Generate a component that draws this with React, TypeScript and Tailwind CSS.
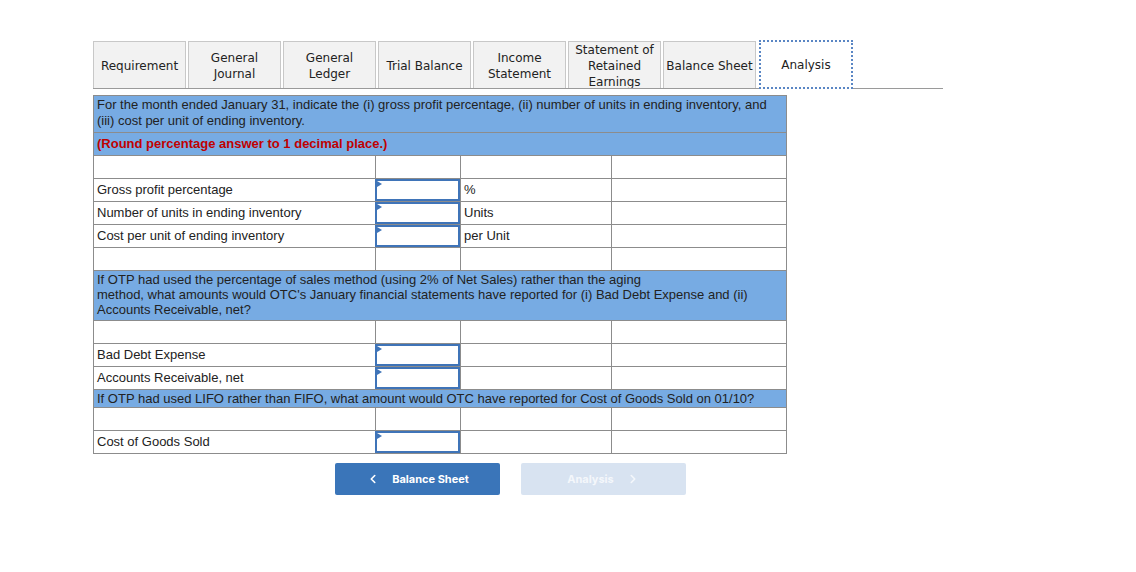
import { ChevronLeft, ChevronRight } from "lucide-react";

type Tab = { label: string[]; active?: boolean };

const tabs: Tab[] = [
  { label: ["Requirement"] },
  { label: ["General", "Journal"] },
  { label: ["General", "Ledger"] },
  { label: ["Trial Balance"] },
  { label: ["Income", "Statement"] },
  { label: ["Statement of", "Retained", "Earnings"] },
  { label: ["Balance Sheet"] },
  { label: ["Analysis"], active: true },
];

const cell = "border border-[#8c8c8c] px-[3px] align-middle";

function InputBox() {
  return (
    <div className="relative -ml-px h-[22px] w-[85px] border-2 border-[#3f74b8] bg-white">
      <div className="absolute left-0 top-0 h-0 w-0 border-y-[3px] border-l-[5px] border-y-transparent border-l-[#3f74b8]" />
    </div>
  );
}

function EmptyRow() {
  return (
    <tr className="h-[23px]">
      <td className={cell}></td>
      <td className={cell}></td>
      <td className={cell}></td>
      <td className={cell}></td>
    </tr>
  );
}

function InputRow({ label, unit }: { label: string; unit?: string }) {
  return (
    <tr className="h-[23px]">
      <td className={cell}>{label}</td>
      <td className="border border-[#8c8c8c] p-0 align-middle">
        <InputBox />
      </td>
      <td className={cell}>{unit ?? ""}</td>
      <td className={cell}></td>
    </tr>
  );
}

export default function App() {
  return (
    <div className="min-h-[572px] w-[1136px] bg-white pl-[93px] pt-[41px]">
      {/* tab strip */}
      <div className="flex h-[48px] w-[850px] items-end gap-[2px] border-b border-[#9a9a9a] font-['DejaVu_Sans',Verdana,sans-serif] text-[12px] leading-[16px] text-[#222]">
        {tabs.map((t) =>
          t.active ? (
            <div
              key={t.label.join(" ")}
              className="-mb-px ml-px flex h-[49px] w-[94px] items-center justify-center border-2 border-dotted border-[#5a86c4] bg-white pt-px text-center"
            >
              {t.label.map((l) => (
                <div key={l}>{l}</div>
              ))}
            </div>
          ) : (
            <div
              key={t.label.join(" ")}
              className="flex h-[47px] w-[93px] flex-col items-center justify-center overflow-hidden border border-b-0 border-[#c8c8c8] bg-[#f2f2f2] pt-px text-center"
            >
              {t.label.map((l) => (
                <div key={l}>{l}</div>
              ))}
            </div>
          )
        )}
      </div>

      {/* analysis table */}
      <table className="mt-[6px] w-[693px] table-fixed border-collapse font-['Liberation_Sans',Arial,sans-serif] text-[13px] text-[#222]">
        <colgroup>
          <col className="w-[282px]" />
          <col className="w-[85px]" />
          <col className="w-[151px]" />
          <col className="w-[175px]" />
        </colgroup>
        <tbody>
          <tr className="h-[36px]">
            <td colSpan={4} className="border border-[#8c8c8c] bg-[#77abe3] px-[3px] pb-[3px] pt-[1px] leading-[16px]">
              For the month ended January 31, indicate the (i) gross profit percentage, (ii) number of units in ending inventory, and (iii) cost per unit of ending inventory.
            </td>
          </tr>
          <tr className="h-[23px]">
            <td colSpan={4} className="border border-[#8c8c8c] bg-[#77abe3] px-[3px] font-bold text-[#c00000]">
              (Round percentage answer to 1 decimal place.)
            </td>
          </tr>
          <EmptyRow />
          <InputRow label="Gross profit percentage" unit="%" />
          <InputRow label="Number of units in ending inventory" unit="Units" />
          <InputRow label="Cost per unit of ending inventory" unit="per Unit" />
          <EmptyRow />
          <tr className="h-[50px]">
            <td colSpan={4} className="border border-[#8c8c8c] bg-[#77abe3] px-[3px] pb-[2px] leading-[15px]">
              If OTP had used the percentage of sales method (using 2% of Net Sales) rather than the aging
              <br />
              method, what amounts would OTC's January financial statements have reported for (i) Bad Debt Expense and (ii) Accounts Receivable, net?
            </td>
          </tr>
          <EmptyRow />
          <InputRow label="Bad Debt Expense" />
          <InputRow label="Accounts Receivable, net" />
          <tr className="h-[18px]">
            <td colSpan={4} className="border border-[#8c8c8c] bg-[#77abe3] px-[3px] leading-[15px]">
              If OTP had used LIFO rather than FIFO, what amount would OTC have reported for Cost of Goods Sold on 01/10?
            </td>
          </tr>
          <EmptyRow />
          <InputRow label="Cost of Goods Sold" />
        </tbody>
      </table>

      {/* navigation */}
      <div className="ml-[242px] mt-[9px] flex gap-[21px] font-['Inter',sans-serif] text-[11px] font-bold text-white">
        <button
          type="button"
          className="flex h-[32px] w-[165px] items-center justify-center gap-[12px] rounded-[2px] bg-[#3a75b9]"
        >
          <ChevronLeft size={14} strokeWidth={2.75} />
          <span>Balance Sheet</span>
        </button>
        <button
          type="button"
          className="flex h-[32px] w-[165px] items-center justify-center gap-[12px] rounded-[2px] bg-[#d8e3f1] text-[#f4f7fb]"
        >
          <span>Analysis</span>
          <ChevronRight size={14} strokeWidth={2.75} />
        </button>
      </div>
    </div>
  );
}
